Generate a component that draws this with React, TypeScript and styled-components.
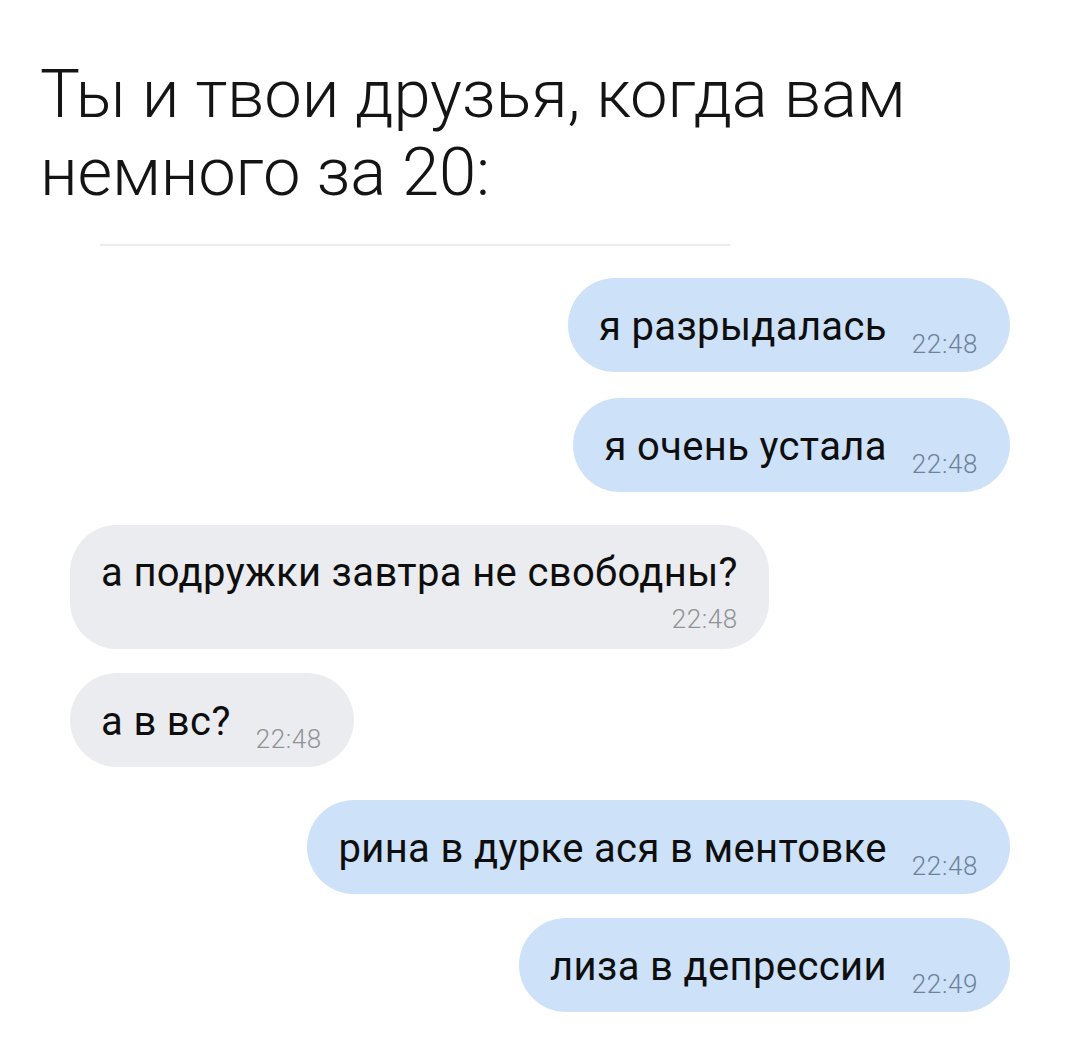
import React from "react";
import styled, { createGlobalStyle } from "styled-components";

const Global = createGlobalStyle`
  html, body { margin: 0; padding: 0; background: #ffffff; }
  body { font-family: Roboto, "Noto Sans", "DejaVu Sans", sans-serif; }
`;

const Page = styled.div`
  width: 1080px;
  min-height: 1063px;
  box-sizing: border-box;
  padding-top: 55px;
  background: #ffffff;
  display: flex;
  flex-direction: column;
`;

const Title = styled.h1`
  margin: 0 0 0 40px;
  font-family: Roboto, "Liberation Sans", sans-serif;
  font-weight: 300;
  font-size: 67px;
  line-height: 78px;
  color: #141414;
  letter-spacing: -0.2px;
`;

const Divider = styled.div`
  margin: 33px 0 0 100px;
  width: 630px;
  height: 2px;
  background: #ececec;
  box-shadow: 0 0 3px rgba(0, 0, 0, 0.04);
`;

const Chat = styled.div`
  display: flex;
  flex-direction: column;
  padding: 0 70px;
  margin-top: 32px;
`;

const Row = styled.div<{ $out: boolean; $gap: number }>`
  display: flex;
  justify-content: ${(p) => (p.$out ? "flex-end" : "flex-start")};
  margin-top: ${(p) => p.$gap}px;
`;

const Bubble = styled.div<{ $out: boolean; $stacked: boolean }>`
  display: flex;
  flex-direction: ${(p) => (p.$stacked ? "column" : "row")};
  align-items: flex-end;
  box-sizing: border-box;
  padding: ${(p) => (p.$stacked ? "0 31px 17px 31px" : "0 32px 15px 31px")};
  border-radius: 47px;
  background: ${(p) => (p.$out ? "#cde1f9" : "#ebecf0")};
`;

const Text = styled.span<{ $stacked: boolean }>`
  align-self: ${(p) => (p.$stacked ? "flex-start" : "auto")};
  padding: ${(p) => (p.$stacked ? "25px 0 0 0" : "26px 0 7px 0")};
  font-family: Roboto, "Liberation Sans", sans-serif;
  font-size: 40px;
  line-height: 46px;
  letter-spacing: 0.35px;
  color: #0e0e0e;
  white-space: nowrap;
`;

const Time = styled.span<{ $out: boolean; $stacked: boolean }>`
  margin-left: ${(p) => (p.$stacked ? "0" : "25px")};
  margin-top: ${(p) => (p.$stacked ? "10px" : "0")};
  font-family: Roboto, "Liberation Sans", sans-serif;
  font-weight: 300;
  font-size: 26px;
  line-height: 26px;
  letter-spacing: 0.6px;
  color: ${(p) => (p.$out ? "#6f8199" : "#929297")};
  white-space: nowrap;
`;

type Msg = { text: string; time: string; out: boolean; stacked?: boolean; gap: number };

const messages: Msg[] = [
  { text: "я разрыдалась", time: "22:48", out: true, gap: 0 },
  { text: "я очень устала", time: "22:48", out: true, gap: 26 },
  { text: "а подружки завтра не свободны?", time: "22:48", out: false, stacked: true, gap: 33 },
  { text: "а в вс?", time: "22:48", out: false, gap: 24 },
  { text: "рина в дурке ася в ментовке", time: "22:48", out: true, gap: 33 },
  { text: "лиза в депрессии", time: "22:49", out: true, gap: 24 },
];

export default function App() {
  return (
    <>
      <Global />
      <Page>
        <Title>
          Ты и твои друзья, когда вам
          <br />
          немного за 20:
        </Title>
        <Divider />
        <Chat>
          {messages.map((m, i) => (
            <Row key={i} $out={m.out} $gap={m.gap}>
              <Bubble $out={m.out} $stacked={!!m.stacked}>
                <Text $stacked={!!m.stacked}>{m.text}</Text>
                <Time $out={m.out} $stacked={!!m.stacked}>
                  {m.time}
                </Time>
              </Bubble>
            </Row>
          ))}
        </Chat>
      </Page>
    </>
  );
}
